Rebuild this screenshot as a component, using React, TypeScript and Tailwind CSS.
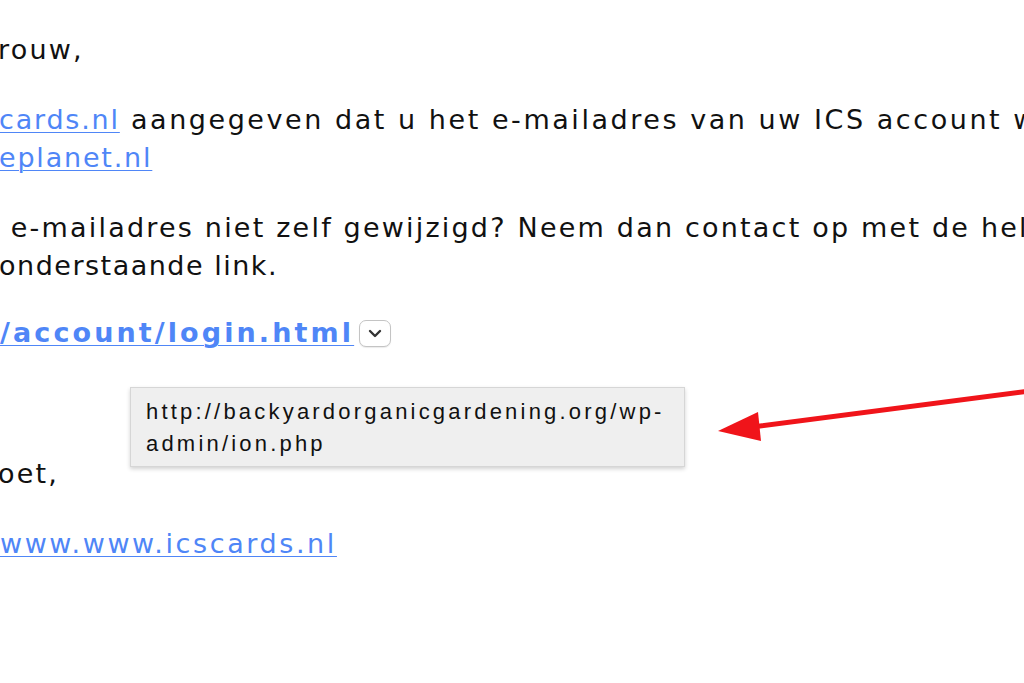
export default function App() {
  const link = "text-[#4f86f7] underline decoration-1 underline-offset-[3px]";
  return (
    <div className="relative w-[1024px] h-[683px] overflow-hidden bg-white text-[#111] font-['DejaVu_Sans',Verdana,sans-serif] text-[27px] leading-[38px] tracking-[2.4px]">
      <div className="pt-[31px]">
        <p className="-ml-[2px] tracking-[2.2px]">rouw,</p>

        <p className="mt-[32px] whitespace-nowrap -ml-[1px] tracking-[2.55px]">
          <span className={`${link} tracking-[1.8px]`}>cards.nl</span> aangegeven dat u het e-mailadres van uw ICS account wijzigt naar
        </p>
        <p className="whitespace-nowrap -ml-[1px] tracking-[1.8px]">
          <span className={link}>eplanet.nl</span>
        </p>

        <p className="mt-[32px] whitespace-nowrap tracking-[2.2px]">
          {"\u00a0"}e-mailadres niet zelf gewijzigd? Neem dan contact op met de helpdesk
        </p>
        <p className="whitespace-nowrap -ml-[1px] tracking-[1.5px]">onderstaande link.</p>

        <p className="mt-[29px] flex items-center whitespace-nowrap">
          <span className={`${link} font-bold tracking-[3.1px]`}>/account/login.html</span>
          <span className="ml-[5px] mt-[1px] flex h-[27px] w-[32px] items-center justify-center rounded-[7px] border border-[#c4c4c4] bg-white shadow-[0_1px_1px_rgba(0,0,0,0.08)]">
            <svg width="14" height="9" viewBox="0 0 14 9" fill="none">
              <path d="M2 2l5 5 5-5" stroke="#333" strokeWidth="2.4" strokeLinecap="round" strokeLinejoin="round" />
            </svg>
          </span>
        </p>

        <p className="mt-[103px] -ml-[2px] tracking-[2.2px]">oet,</p>

        <p className="mt-[32px] whitespace-nowrap">
          <span className={`${link} tracking-[2.6px]`}>www.www.icscards.nl</span>
        </p>
      </div>

      <div className="absolute left-[130px] top-[387px] w-[555px] h-[80px] border border-[#d6d6d6] bg-[#efefef] shadow-[0_2px_4px_rgba(0,0,0,0.18)] px-[15px] pt-[8px] font-['Liberation_Sans',Arial,sans-serif] text-[22px] leading-[32px] tracking-[3.2px] text-[#111]">
        <div className="whitespace-nowrap">http://backyardorganicgardening.org/wp-</div>
        <div>admin/ion.php</div>
      </div>

      <svg className="absolute left-0 top-0" width="1024" height="683" viewBox="0 0 1024 683">
        <line x1="1030" y1="391" x2="752" y2="427" stroke="#f0141a" strokeWidth="5" strokeLinecap="round" />
        <polygon points="718,431 758,412 761,441" fill="#f0141a" />
      </svg>
    </div>
  );
}
